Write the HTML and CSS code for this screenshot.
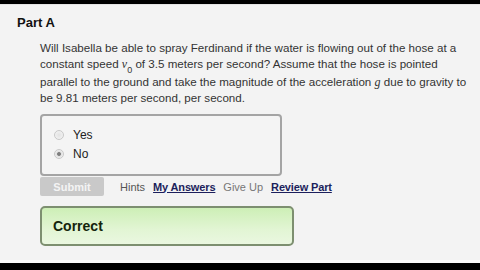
FILE: index.html
```html
<!DOCTYPE html>
<html>
<head>
<meta charset="utf-8">
<link rel="stylesheet" href="styles.css">
</head>
<body>
<div class="screen">
  <div class="topbar"></div>
  <main class="part">
    <h2 class="part-title">Part A</h2>
    <p class="question">Will Isabella be able to spray Ferdinand if the water is flowing out of the hose at a constant speed <span class="var">v</span><sub>0</sub> of 3.5 meters per second? Assume that the hose is pointed parallel to the ground and take the magnitude of the acceleration <span class="var g">g</span> due to gravity to be 9.81 meters per second, per second.</p>
    <div class="choices">
      <label class="choice"><span class="radio"></span>Yes</label>
      <label class="choice"><span class="radio checked"></span>No</label>
    </div>
    <div class="actions">
      <span class="submit">Submit</span>
      <span class="act hints">Hints</span>
      <span class="act link">My Answers</span>
      <span class="act muted">Give Up</span>
      <span class="act link">Review Part</span>
    </div>
    <div class="feedback">Correct</div>
  </main>
  <div class="bottom-line"></div>
  <div class="bottombar"></div>
</div>
</body>
</html>
```

FILE: styles.css
```css
html, body {
  margin: 0;
  padding: 0;
}
body {
  width: 480px;
  height: 270px;
  overflow: hidden;
  background: #000;
  font-family: "Liberation Sans", Arial, sans-serif;
}
.screen {
  width: 480px;
  height: 270px;
  display: flex;
  flex-direction: column;
}
.topbar {
  height: 4px;
  background: #000;
}
.part {
  flex: 1;
  background: #f3f3f3;
  padding: 0 0 0 17px;
  display: flex;
  flex-direction: column;
  border-top: 1px solid #e4e4e4;
}
.part-title {
  margin: 10px 0 0 0;
  font-size: 13px;
  font-weight: bold;
  line-height: 16px;
  color: #111;
}
.question {
  margin: 9px 0 0 23px;
  width: 432px;
  font-size: 11.6px;
  line-height: 16px;
  color: #333;
}
.var {
  font-family: "Liberation Serif", serif;
  font-style: italic;
  font-size: 12px;
  line-height: 0;
}
.question sub {
  font-size: 9px;
  line-height: 8px;
  vertical-align: -5px;
}
.choices {
  margin: 8px 0 0 23px;
  width: 238px;
  height: 58px;
  border: 2px solid #a4a4a4;
  border-radius: 4px;
  background: #f4f4f4;
  display: flex;
  flex-direction: column;
}
.choice {
  display: flex;
  align-items: center;
  font-size: 12px;
  color: #222;
  height: 19px;
  padding-left: 12px;
}
.choice:first-child {
  margin-top: 9px;
}
.radio {
  width: 8px;
  height: 8px;
  border-radius: 50%;
  border: 1px solid #c8c8c8;
  background: radial-gradient(circle, #e2e2e2 0, #f0f0f0 70%);
  margin-right: 9px;
  display: inline-block;
}
.radio.checked {
  background: radial-gradient(circle, #777 0, #888 30%, #e0e0e0 40%, #eee 70%);
}
.actions {
  margin: 1px 0 0 23px;
  display: flex;
  align-items: center;
  height: 19px;
  font-size: 11px;
}
.submit {
  width: 64px;
  height: 19px;
  background: #c9c9c9;
  border-radius: 2px;
  color: #f4f4f4;
  font-weight: bold;
  font-size: 11px;
  display: flex;
  align-items: center;
  justify-content: center;
  margin-right: 16px;
}
.act {
  margin-right: 8px;
}
.hints {
  color: #555;
}
.link {
  color: #1c1f5c;
  font-weight: bold;
  text-decoration: underline;
  letter-spacing: -0.15px;
}
.muted {
  color: #777;
}
.feedback {
  margin: 10px 0 0 23px;
  width: 239px;
  height: 36px;
  border: 2px solid #7d8f70;
  border-radius: 5px;
  background: linear-gradient(to bottom, #cdefb6 0%, #e2f5d4 60%, #eaf7e0 100%);
  color: #14240c;
  font-size: 14px;
  font-weight: bold;
  display: flex;
  align-items: center;
  padding-left: 11px;
}
.bottom-line {
  height: 3px;
  background: #fbfbfb;
}
.bottombar {
  height: 7px;
  background: #000;
}
```
